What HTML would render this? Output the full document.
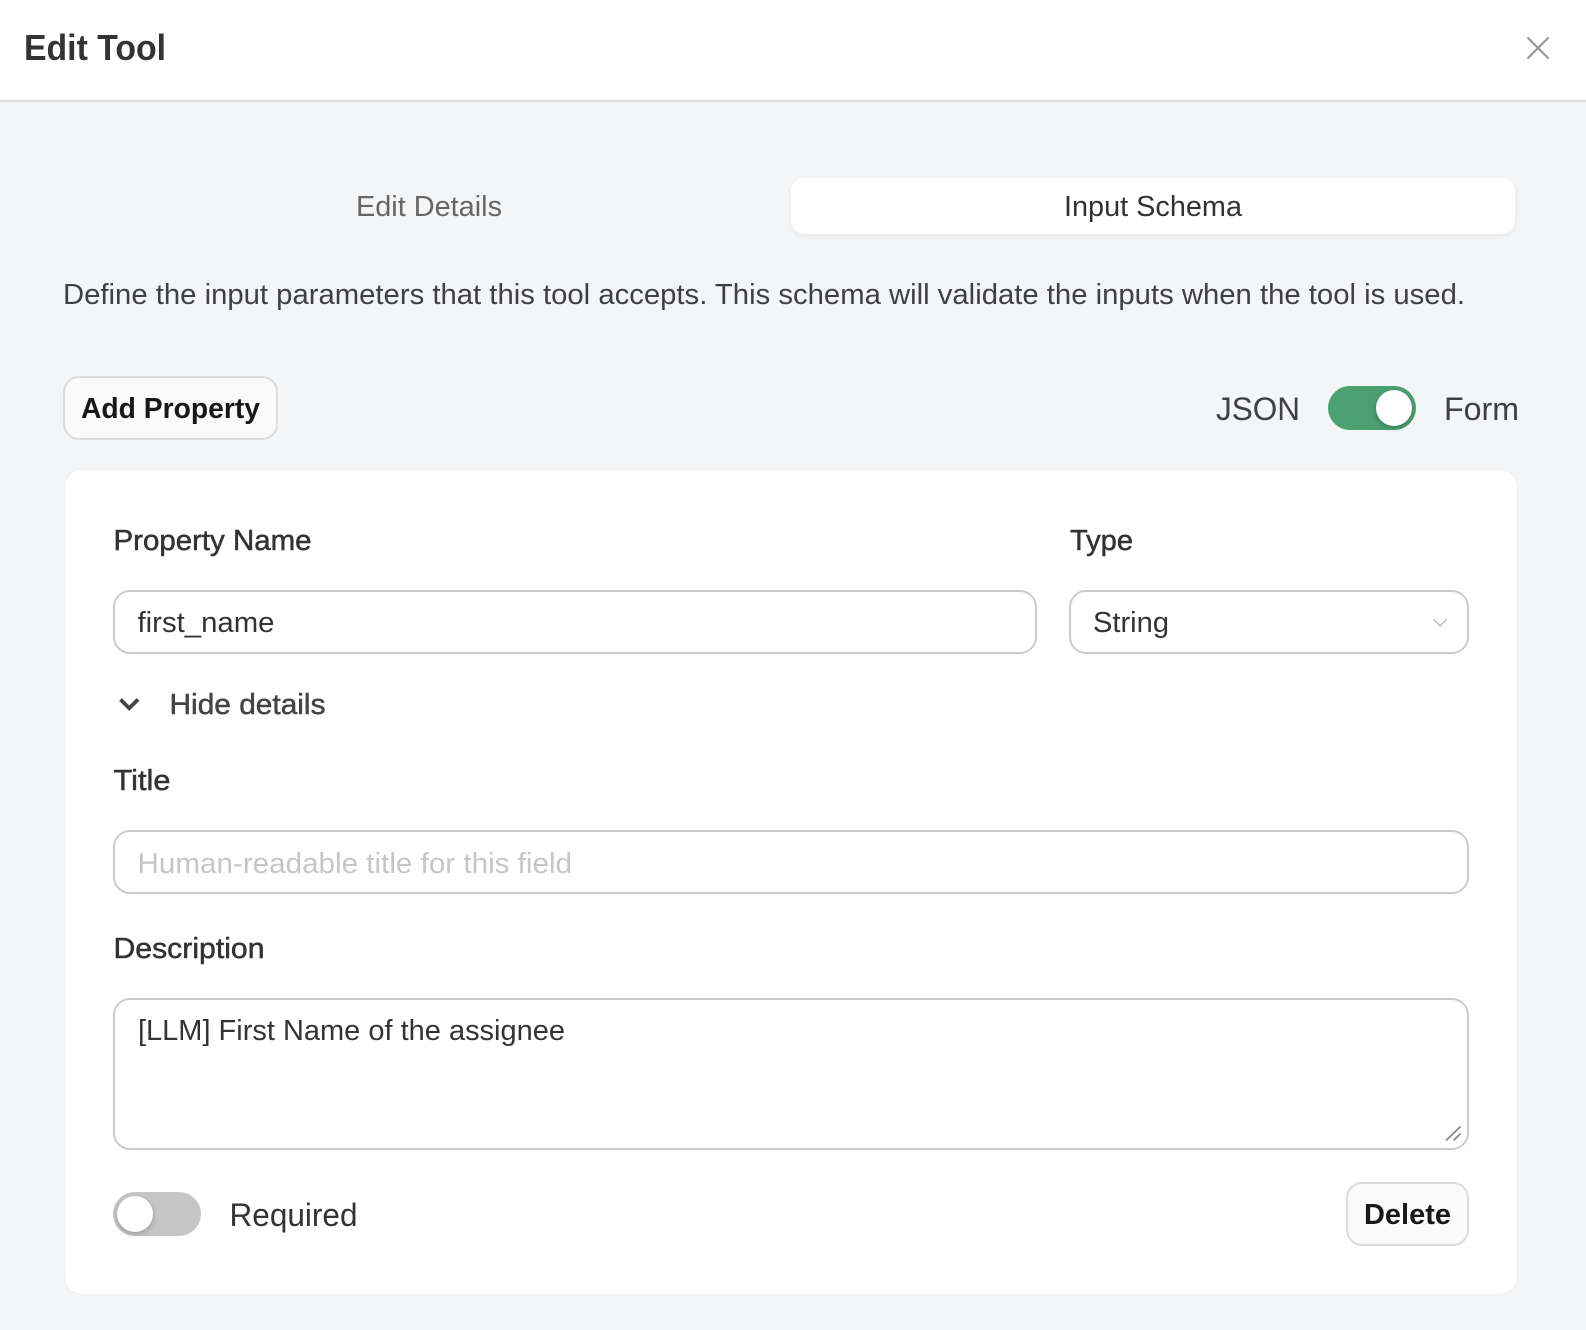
<!DOCTYPE html>
<html lang="en">
<head>
<meta charset="utf-8">
<title>Edit Tool</title>
<style>
html,body{margin:0;padding:0;width:1586px;height:1330px;overflow:hidden;background:#f4f5f7;font-family:"Liberation Sans",sans-serif}
.b{position:absolute;box-sizing:border-box}
#hdr{left:0;top:0;width:1586px;height:102px;background:#fff;border-bottom:2px solid #dcdcdc}
#tab{left:791px;top:178px;width:724px;height:56px;background:#fff;border-radius:13px;box-shadow:0 2px 6px rgba(0,0,0,.06)}
.btn{background:#fafafa;border:2px solid #dcdcdc;border-radius:16px}
#add{left:63px;top:376px;width:215px;height:64px}
#del{left:1346px;top:1182px;width:123px;height:64px}
#card{left:64px;top:469px;width:1454px;height:826px;background:#fff;border:1px solid #eeeff1;border-radius:18px}
.in{background:#fff;border:2px solid #cbcbcb;border-radius:17px}
#i1{left:113px;top:590px;width:924px;height:64px}
#i2{left:1069px;top:590px;width:400px;height:64px}
#i3{left:113px;top:830px;width:1356px;height:64px}
#i4{left:113px;top:998px;width:1356px;height:152px}
.sw{width:88px;height:44px;border-radius:22px}
#s1{left:1328px;top:386px;background:#4aa071}
#s2{left:113px;top:1192px;background:#c6c6c6}
.th{width:36px;height:36px;border-radius:50%;background:#fff;box-shadow:0 2px 6px rgba(0,0,0,.22)}
#t1{left:1376px;top:390px}
#t2{left:117px;top:1196px}
svg{position:absolute;left:0;top:0}
text{font-family:"Liberation Sans",sans-serif;white-space:pre}
</style>
</head>
<body>
<div class="b" id="hdr"></div>
<div class="b" id="tab"></div>
<div class="b btn" id="add"></div>
<div class="b sw" id="s1"></div>
<div class="b th" id="t1"></div>
<div class="b" id="card"></div>
<div class="b in" id="i1"></div>
<div class="b in" id="i2"></div>
<div class="b in" id="i3"></div>
<div class="b in" id="i4"></div>
<div class="b sw" id="s2"></div>
<div class="b th" id="t2"></div>
<div class="b btn" id="del"></div>
<svg width="1586" height="1330" viewBox="0 0 1586 1330">
<text x="24" y="60" font-size="36" font-weight="700" fill="#333" textLength="142" lengthAdjust="spacingAndGlyphs">Edit Tool</text>
<path d="M1527.5 37.5L1548.5 58.5M1548.5 37.5L1527.5 58.5" stroke="#999" stroke-width="2.2" fill="none"/>
<text x="356" y="216" font-size="29" fill="#666" textLength="146" lengthAdjust="spacingAndGlyphs">Edit Details</text>
<text x="1064" y="216" font-size="29" fill="#333" textLength="178" lengthAdjust="spacingAndGlyphs">Input Schema</text>
<text x="63" y="304" font-size="29" fill="#3f3f46" textLength="1402" lengthAdjust="spacingAndGlyphs">Define the input parameters that this tool accepts. This schema will validate the inputs when the tool is used.</text>
<text x="81" y="418" font-size="29" font-weight="700" fill="#18181b" textLength="179" lengthAdjust="spacingAndGlyphs">Add Property</text>
<text x="1216" y="420" font-size="32" fill="#3f3f46" textLength="84" lengthAdjust="spacingAndGlyphs">JSON</text>
<text x="1444" y="420" font-size="32" fill="#3f3f46" textLength="75" lengthAdjust="spacingAndGlyphs">Form</text>
<text x="113.5" y="550" font-size="29" fill="#333" stroke="#333" stroke-width=".5" textLength="198" lengthAdjust="spacingAndGlyphs">Property Name</text>
<text x="1070" y="550" font-size="29" fill="#333" stroke="#333" stroke-width=".5" textLength="63" lengthAdjust="spacingAndGlyphs">Type</text>
<text x="137.5" y="632" font-size="29" fill="#333" textLength="137" lengthAdjust="spacingAndGlyphs">first_name</text>
<text x="1093" y="632" font-size="29" fill="#333" textLength="76" lengthAdjust="spacingAndGlyphs">String</text>
<path d="M1433.5 619L1440.2 626L1447 619" stroke="#bdbdbd" stroke-width="1.4" fill="none"/>
<path d="M120.5 699.5L129.2 708.2L138 699.5" stroke="#444" stroke-width="3.8" fill="none"/>
<text x="169.5" y="714" font-size="29" fill="#444" stroke="#444" stroke-width=".5" textLength="156" lengthAdjust="spacingAndGlyphs">Hide details</text>
<text x="113.5" y="790" font-size="29" fill="#333" stroke="#333" stroke-width=".5" textLength="57" lengthAdjust="spacingAndGlyphs">Title</text>
<text x="137.5" y="873" font-size="29" fill="#c6c6c6" textLength="434.5" lengthAdjust="spacingAndGlyphs">Human-readable title for this field</text>
<text x="113.5" y="958" font-size="29" fill="#333" stroke="#333" stroke-width=".5" textLength="151" lengthAdjust="spacingAndGlyphs">Description</text>
<text x="138" y="1040" font-size="29" fill="#333" textLength="427" lengthAdjust="spacingAndGlyphs">[LLM] First Name of the assignee</text>
<path d="M1446 1140.5L1460.5 1126.5M1453.5 1140.5L1460.5 1133.5" stroke="#888" stroke-width="1.8" fill="none"/>
<text x="229.5" y="1226" font-size="32" fill="#333" textLength="128" lengthAdjust="spacingAndGlyphs">Required</text>
<text x="1364" y="1224" font-size="29" font-weight="700" fill="#18181b" textLength="87" lengthAdjust="spacingAndGlyphs">Delete</text>
</svg>
</body>
</html>
